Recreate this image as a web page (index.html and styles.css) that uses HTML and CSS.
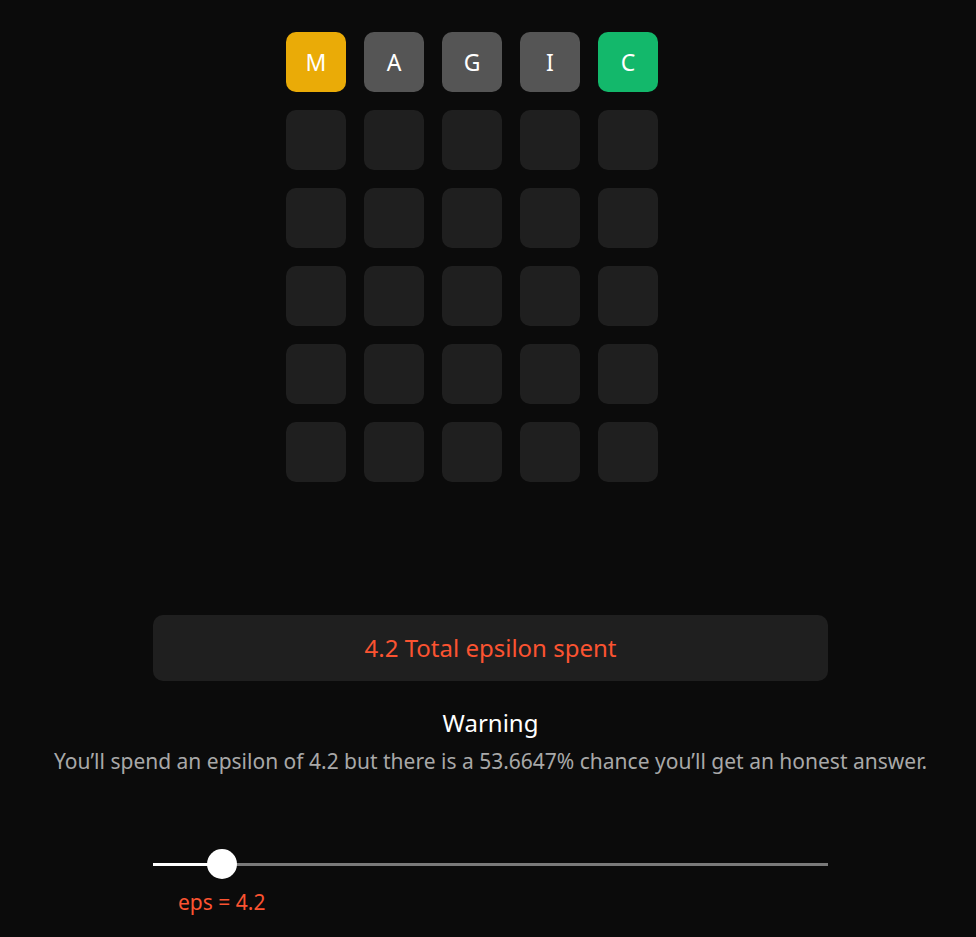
FILE: index.html
```html
<!DOCTYPE html>
<html>
<head>
<meta charset="utf-8">
<link rel="stylesheet" href="styles.css">
</head>
<body>
<main class="page">
  <div class="board">
    <div class="tile present">M</div>
    <div class="tile absent">A</div>
    <div class="tile absent">G</div>
    <div class="tile absent">I</div>
    <div class="tile correct">C</div>
    <div class="tile"></div><div class="tile"></div><div class="tile"></div><div class="tile"></div><div class="tile"></div>
    <div class="tile"></div><div class="tile"></div><div class="tile"></div><div class="tile"></div><div class="tile"></div>
    <div class="tile"></div><div class="tile"></div><div class="tile"></div><div class="tile"></div><div class="tile"></div>
    <div class="tile"></div><div class="tile"></div><div class="tile"></div><div class="tile"></div><div class="tile"></div>
    <div class="tile"></div><div class="tile"></div><div class="tile"></div><div class="tile"></div><div class="tile"></div>
  </div>
  <div class="spent">4.2 Total epsilon spent</div>
  <div class="warning">
    <div class="warning-title">Warning</div>
    <div class="warning-text">You’ll spend an epsilon of 4.2 but there is a 53.6647% chance you’ll get an honest answer.</div>
  </div>
  <div class="slider">
    <div class="track">
      <div class="fill" style="width: 10.2%"></div>
      <div class="thumb" style="left: 10.2%"></div>
    </div>
  </div>
  <div class="slider-label">eps = 4.2</div>
</main>
</body>
</html>
```
FILE: styles.css
```css
html, body {
  margin: 0;
  padding: 0;
  background: #0b0b0b;
}
body {
  font-family: "Noto Sans", "Open Sans", sans-serif;
  color: #fff;
}
.page {
  width: 976px;
  min-height: 937px;
  padding: 32px 0 0 5px;
  box-sizing: border-box;
}
.board {
  display: grid;
  grid-template-columns: repeat(5, 60px);
  grid-auto-rows: 60px;
  gap: 18px;
  justify-content: center;
  padding-right: 37px;
}
.tile {
  background: #1f1f1f;
  border-radius: 10px;
  display: flex;
  align-items: center;
  justify-content: center;
  font-size: 23px;
  color: #fff;
}
.tile.present { background: #eaab07; }
.tile.absent { background: #555555; }
.tile.correct { background: #13b86b; }
.spent {
  width: 675px;
  height: 66px;
  margin: 133px auto 0;
  padding-bottom: 2px;
  box-sizing: border-box;
  background: #1f1f1f;
  border-radius: 10px;
  display: flex;
  align-items: center;
  justify-content: center;
  color: #fb5331;
  font-size: 24px;
}
.warning {
  text-align: center;
  margin-top: 26px;
}
.warning-title {
  font-size: 24px;
  line-height: 32px;
  color: #fff;
}
.warning-text {
  margin-top: 7px;
  font-size: 21px;
  line-height: 30px;
  color: #a8a8a8;
}
.slider {
  width: 675px;
  height: 30px;
  margin: 73px auto 0;
  display: flex;
  align-items: center;
}
.track {
  position: relative;
  width: 100%;
  height: 3px;
  background: #7a7a7a;
}
.fill {
  height: 100%;
  background: #fff;
}
.thumb {
  position: absolute;
  top: 50%;
  width: 30px;
  height: 30px;
  margin: -15px 0 0 -15px;
  border-radius: 50%;
  background: #fff;
}
.slider-label {
  width: 675px;
  margin: 9px auto 0;
  box-sizing: border-box;
  padding-left: 25px;
  font-size: 21px;
  line-height: 28px;
  color: #fb5331;
}
```
